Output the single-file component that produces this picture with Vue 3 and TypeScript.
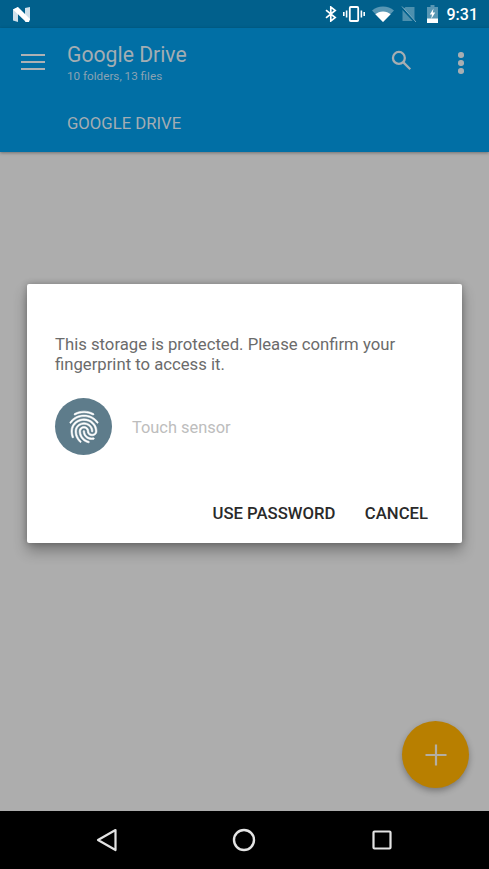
<script setup lang="ts">
const fingerprint = 'M17.81 4.47c-.08 0-.16-.02-.23-.06C15.66 3.42 14 3 12.01 3c-1.98 0-3.86.47-5.57 1.41-.24.13-.54.04-.68-.2-.13-.24-.04-.55.2-.68C7.82 2.52 9.86 2 12.01 2c2.13 0 3.99.47 6.03 1.52.25.13.34.43.21.67-.09.18-.26.28-.44.28zM3.5 9.72c-.1 0-.2-.03-.29-.09-.23-.16-.28-.47-.12-.7.99-1.4 2.25-2.5 3.75-3.27C9.98 4.04 14 4.03 17.15 5.65c1.5.77 2.76 1.86 3.75 3.25.16.22.11.54-.12.7-.23.16-.54.11-.7-.12-.9-1.26-2.04-2.25-3.39-2.94-2.87-1.47-6.54-1.47-9.4.01-1.36.7-2.5 1.7-3.4 2.96-.08.14-.23.21-.39.21zm6.25 12.07c-.13 0-.26-.05-.35-.15-.87-.87-1.34-1.43-2.01-2.64-.69-1.23-1.05-2.73-1.05-4.34 0-2.97 2.54-5.39 5.66-5.39s5.66 2.42 5.66 5.39c0 .28-.22.5-.5.5s-.5-.22-.5-.5c0-2.42-2.09-4.39-4.66-4.39-2.57 0-4.66 1.97-4.66 4.39 0 1.44.32 2.77.93 3.85.64 1.15 1.08 1.64 1.85 2.42.19.2.19.51 0 .71-.11.1-.24.15-.37.15zm7.17-1.85c-1.19 0-2.24-.3-3.1-.89-1.49-1.01-2.38-2.65-2.38-4.39 0-.28.22-.5.5-.5s.5.22.5.5c0 1.41.72 2.74 1.94 3.56.71.48 1.54.71 2.54.71.24 0 .64-.03 1.04-.1.27-.05.53.13.58.41.05.27-.13.53-.41.58-.57.11-1.07.12-1.21.12zM14.91 22c-.04 0-.09-.01-.13-.02-1.59-.44-2.63-1.03-3.72-2.1-1.4-1.39-2.17-3.24-2.17-5.22 0-1.62 1.38-2.94 3.08-2.94 1.7 0 3.08 1.32 3.08 2.94 0 1.07.93 1.94 2.08 1.94s2.08-.87 2.08-1.94c0-3.77-3.25-6.83-7.25-6.83-2.84 0-5.44 1.58-6.61 4.03-.39.81-.59 1.76-.59 2.8 0 .78.07 2.01.67 3.61.1.26-.03.55-.29.64-.26.1-.55-.04-.64-.29-.49-1.31-.73-2.61-.73-3.96 0-1.2.23-2.29.68-3.24 1.33-2.79 4.28-4.6 7.51-4.6 4.55 0 8.25 3.51 8.25 7.83 0 1.62-1.38 2.94-3.08 2.94s-3.08-1.32-3.08-2.94c0-1.07-.93-1.94-2.08-1.94s-2.08.87-2.08 1.94c0 1.71.66 3.31 1.87 4.51.95.94 1.86 1.46 3.27 1.85.27.07.42.35.35.61-.05.23-.26.38-.47.38z'
</script>

<template>
  <div class="phone">
    <div class="status">
      <svg width="17" height="15" viewBox="0 0 17 15">
        <path d="M0 2.5 5 0v15l-5-1.5z" fill="#cfe0ea" />
        <path d="M12 1 17 0v13l-5 2z" fill="#cfe0ea" />
        <path d="M0 2.5 5 0l12 12-1 3h-3z" fill="#fff" />
      </svg>
      <div class="status-right">
        <svg width="12" height="16" viewBox="0 0 12 16" fill="none" stroke="#fff" stroke-width="1.7">
          <path d="M1 4.2 10.2 11.6 5.8 15V1l4.4 3.4L1 11.8" />
        </svg>
        <svg class="ml-vib" width="22" height="16" viewBox="0 0 22 16" fill="none" stroke="#fff">
          <rect x="6.8" y="1" width="8.4" height="14" rx="1" stroke-width="1.8" />
          <path d="M3.6 4.5v7M18.4 4.5v7" stroke-width="1.6" />
          <path d="M.8 6v4M21.2 6v4" stroke-width="1.6" />
        </svg>
        <svg class="ml-wifi" width="22" height="16" viewBox="0 0 22 16">
          <path d="M0 4.5C3 2 6.800.5 11 .5s8 1.500 11 4L11 16z" fill="#fff" fill-opacity=".35" />
          <path d="M3.300 8.300C5.300 6.500 8 5.400 11 5.400s5.700 1.100 7.700 2.900L11 16z" fill="#fff" />
        </svg>
        <svg class="ml-sim" width="15" height="17" viewBox="0 0 15 17">
          <path d="M4.500 1H13.500v14H1.500V4z" fill="#fff" fill-opacity=".3" />
          <path d="M.5 1.500 14.500 16.500" stroke="#01608c" stroke-width="2.200" />
          <path d="M1 .5 15 16" stroke="#fff" stroke-opacity=".45" stroke-width="1" />
        </svg>
        <svg class="ml-bat" width="11" height="18" viewBox="0 0 11 18">
          <path d="M3.500 0h4v2H11v16H0V2h3.500z" fill="#fff" fill-opacity=".35" />
          <path d="M0 13.500h11V18H0z" fill="#fff" />
          <path d="M6.500 3.500 2.800 9.500h2.200l-.8 4.500 4-6.500H5.800z" fill="#fff" />
        </svg>
        <span class="clock">9:31</span>
      </div>
    </div>

    <header class="toolbar">
      <div class="top-row">
        <div class="burger"><i></i><i></i><i></i></div>
        <div class="titles">
          <div class="title">Google Drive</div>
          <div class="subtitle">10 folders, 13 files</div>
        </div>
        <svg class="search" width="25" height="25" viewBox="0 0 24 24" fill="none" stroke="#a7aeb2" stroke-width="2.200">
          <circle cx="9.500" cy="9.500" r="5.700" />
          <path d="m13.800 13.800 6.600 6.600" />
        </svg>
        <div class="dots"><i></i><i></i><i></i></div>
      </div>
      <div class="tab">GOOGLE DRIVE</div>
    </header>

    <main class="content">
      <div class="dialog">
        <p class="message">This storage is protected. Please confirm your fingerprint to access it.</p>
        <div class="sensor">
          <div class="sensor-circle">
            <svg width="38" height="38" viewBox="0 0 24 24"><path :d="fingerprint" fill="#fff" stroke="#fff" stroke-width=".35" /></svg>
          </div>
          <span class="sensor-text">Touch sensor</span>
        </div>
        <div class="actions">
          <span>USE PASSWORD</span>
          <span>CANCEL</span>
        </div>
      </div>
      <div class="fab">
        <svg width="22" height="22" viewBox="0 0 22 22" stroke="#b3aea3" stroke-width="2.200"><path d="M11 0.500v21M0.500 11h21" /></svg>
      </div>
    </main>

    <nav class="navbar">
      <svg width="22" height="24" viewBox="0 0 22 24" fill="none" stroke="#e4e4e4" stroke-width="2.200" stroke-linejoin="round">
        <path d="M19.500 2 2 12l17.500 10z" />
      </svg>
      <svg width="24" height="24" viewBox="0 0 24 24" fill="none" stroke="#e4e4e4" stroke-width="2.400">
        <circle cx="12" cy="12" r="10" />
      </svg>
      <svg class="nav-recent" width="20" height="20" viewBox="0 0 20 20" fill="none" stroke="#e4e4e4" stroke-width="2.200">
        <rect x="1.500" y="1.500" width="17" height="17" rx="1" />
      </svg>
    </nav>
  </div>
</template>

<style scoped>
.phone {
  width: 489px;
  height: 869px;
  display: flex;
  flex-direction: column;
  overflow: hidden;
  font-family: Roboto, "Liberation Sans", sans-serif;
}
.status {
  height: 28px;
  flex: none;
  background: #01608c;
  display: flex;
  align-items: center;
  justify-content: space-between;
  padding: 0 11px 0 13px;
}
.status-right {
  display: flex;
  align-items: center;
}
.ml-vib { margin-left: 6px; }
.ml-wifi { margin-left: 7px; }
.ml-sim { margin-left: 7px; }
.ml-bat { margin-left: 11px; margin-top: -1px; }
.clock {
  margin-left: 9px;
  color: #fff;
  font-size: 16px;
  font-weight: 500;
}
.toolbar {
  height: 124px;
  flex: none;
  background: #016fa5;
  color: #a3adb3;
  box-shadow: 0 1px 3px rgba(0, 0, 0, .35);
  position: relative;
  z-index: 1;
}
.top-row {
  display: flex;
  align-items: flex-start;
  padding: 15px 25.500px 0 21px;
  height: 77px;
  box-sizing: border-box;
}
.burger {
  width: 24px;
  display: flex;
  flex-direction: column;
  gap: 4.500px;
  margin-top: 10.500px;
}
.burger i {
  display: block;
  height: 2.500px;
  background: #adb1b4;
}
.titles {
  margin-left: 22px;
  flex: 1;
}
.title {
  font-size: 21.200px;
  line-height: 24px;
}
.subtitle {
  font-size: 11.700px;
  line-height: 15px;
  margin-top: 2px;
  color: #8ba3b3;
}
.search {
  margin-top: 4.500px;
}
.dots {
  margin-left: 44px;
  margin-top: 9px;
  display: flex;
  flex-direction: column;
  gap: 2.500px;
}
.dots i {
  display: block;
  width: 5.500px;
  height: 5.500px;
  border-radius: 50%;
  background: #a7aeb2;
}
.tab {
  padding-left: 67px;
  font-size: 16.700px;
  line-height: 20px;
  margin-top: 9px;
}
.content {
  flex: 1;
  background: #adadad;
  position: relative;
  padding-top: 132px;
}
.dialog {
  margin: 0 27px;
  height: 259px;
  box-sizing: border-box;
  background: #fff;
  border-radius: 2px;
  padding: 51px 28px 0;
  box-shadow: 0 8px 14px rgba(0, 0, 0, .3), 0 0 6px rgba(0, 0, 0, .25);
  display: flex;
  flex-direction: column;
}
.message {
  margin: 0;
  font-size: 16.700px;
  line-height: 20px;
  color: #6b6b6b;
}
.sensor {
  display: flex;
  align-items: center;
  margin-top: 23px;
}
.sensor-circle {
  width: 57px;
  height: 57px;
  border-radius: 50%;
  background: #5e7c8b;
  display: flex;
  align-items: center;
  justify-content: center;
}
.sensor-text {
  margin-left: 20px;
  font-size: 16.400px;
  color: #bdbdbd;
  padding-top: 1px;
}
.actions {
  display: flex;
  justify-content: flex-end;
  gap: 29.500px;
  margin: 49px 6px 0 0;
  font-size: 16.700px;
  font-weight: 500;
  line-height: 19px;
  color: #2a2a2a;
}
.fab {
  position: absolute;
  left: 402px;
  top: 569px;
  width: 67px;
  height: 67px;
  border-radius: 50%;
  background: #b87f00;
  box-shadow: 0 3px 6px rgba(0, 0, 0, .3);
  display: flex;
  align-items: center;
  justify-content: center;
}
.navbar {
  height: 58px;
  flex: none;
  background: #000;
  display: flex;
  align-items: center;
  padding-left: 96px;
  gap: 114px;
}
.nav-recent {
  margin-left: 2px;
}
</style>
